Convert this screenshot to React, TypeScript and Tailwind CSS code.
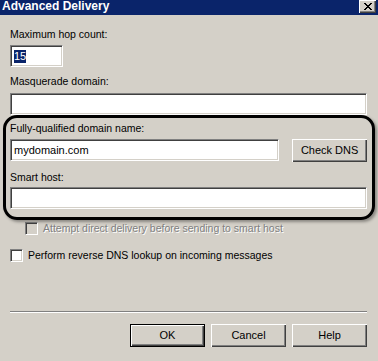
import React from "react";

const font = "font-['Tahoma','Liberation_Sans',sans-serif] text-[10.5px] leading-[13px] text-black";

const sunken =
  "bg-white border border-t-[#808080] border-l-[#808080] border-r-white border-b-white shadow-[inset_1px_1px_0_#404040,inset_-1px_-1px_0_#d4d0c8]";

const raised =
  "bg-[#d4d0c8] shadow-[inset_1px_1px_0_#ffffff,inset_-1px_-1px_0_#404040,inset_-2px_-2px_0_#808080]";

function Field({ className = "", value }: { className?: string; value?: React.ReactNode }) {
  return (
    <div className={`${sunken} h-[22px] flex items-center px-[3px] text-[11px] ${className}`}>
      {value}
    </div>
  );
}

function Button({ label, isDefault }: { label: string; isDefault?: boolean }) {
  return (
    <div
      className={`w-[75px] h-[23px] flex items-center justify-center text-[11px] ${
        isDefault ? "border border-black" : ""
      } ${raised}`}
    >
      {label}
    </div>
  );
}

function Checkbox({ disabled }: { disabled?: boolean }) {
  return (
    <div
      className={`w-[13px] h-[13px] shrink-0 border border-t-[#808080] border-l-[#808080] border-r-white border-b-white shadow-[inset_1px_1px_0_#404040,inset_-1px_-1px_0_#d4d0c8] ${
        disabled ? "bg-[#d4d0c8]" : "bg-white"
      }`}
    />
  );
}

export default function App() {
  return (
    <div className={`${font} relative w-[378px] h-[361px] bg-[#d4d0c8] overflow-hidden flex flex-col`}>
      {/* Title bar */}
      <div className="h-[15px] bg-[#0a246a] flex items-start justify-between pl-[2px] pr-[2px]">
        <span className="text-white font-bold text-[12px] leading-[14px] -mt-[1px]">Advanced Delivery</span>
        <div className={`${raised} w-[17px] h-[13px] flex items-center justify-center`}>
          <svg width="8" height="7" viewBox="0 0 8 7" shapeRendering="crispEdges">
            <path d="M0 0h2v1h-2zM6 0h2v1h-2zM1 1h2v1h-2zM5 1h2v1h-2zM2 2h4v1h-4zM3 3h2v1h-2zM2 4h4v1h-4zM1 5h2v1h-2zM5 5h2v1h-2zM0 6h2v1h-2zM6 6h2v1h-2z" fill="#000" />
          </svg>
        </div>
      </div>

      <div className="flex flex-col pl-[10px] pr-[11px]">
        <div className="mt-[13px]">Maximum hop count:</div>
        <Field
          className="mt-[4px] w-[53px]"
          value={<span className="bg-[#0a246a] text-white">15</span>}
        />

        <div className="mt-[8px]">Masquerade domain:</div>
        <Field className="mt-[5px] w-full" />

        <div className="mt-[7px]">Fully-qualified domain name:</div>
        <div className="mt-[4px] flex gap-[13px]">
          <Field className="w-[270px]" value="mydomain.com" />
          <Button label="Check DNS" />
        </div>

        <div className="mt-[9px]">Smart host:</div>
        <Field className="mt-[3px] w-full" />

        <div className="mt-[13px] ml-[15px] flex items-center gap-[5px]">
          <Checkbox disabled />
          <span className="text-[#808080] [text-shadow:1px_1px_0_#ffffff]">
            Attempt direct delivery before sending to smart host
          </span>
        </div>

        <div className="mt-[14px] flex items-center gap-[5px]">
          <Checkbox />
          <span>Perform reverse DNS lookup on incoming messages</span>
        </div>

        <div className="mt-[49px] h-[2px] border-t border-t-[#808080] border-b border-b-white" />

        <div className="mt-[11px] flex justify-end gap-[6px]">
          <Button label="OK" isDefault />
          <Button label="Cancel" />
          <Button label="Help" />
        </div>
      </div>

      {/* Annotation highlight */}
      <div className="absolute left-[3px] top-[115px] w-[372px] h-[105px] border-[3px] border-black rounded-[14px] shadow-[2px_2px_3px_rgba(0,0,0,0.35)] pointer-events-none" />
    </div>
  );
}
